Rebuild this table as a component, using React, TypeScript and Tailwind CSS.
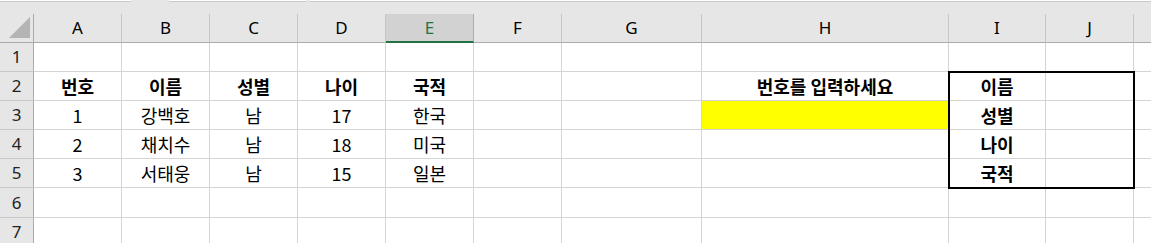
import React from "react";

const columns = ["A", "B", "C", "D", "E", "F", "G", "H", "I", "J", ""];
const activeColumn = "E";

type Cell = { text?: string; bold?: boolean; fill?: string; outline?: boolean };

// sheet contents, rows 1..7, columns A..K
const rows: Cell[][] = [
  [],
  [
    { text: "번호", bold: true },
    { text: "이름", bold: true },
    { text: "성별", bold: true },
    { text: "나이", bold: true },
    { text: "국적", bold: true },
    {},
    {},
    { text: "번호를 입력하세요", bold: true },
    { text: "이름", bold: true, outline: true },
  ],
  [
    { text: "1" },
    { text: "강백호" },
    { text: "남" },
    { text: "17" },
    { text: "한국" },
    {},
    {},
    { fill: "bg-[#ffff00]" },
    { text: "성별", bold: true },
  ],
  [
    { text: "2" },
    { text: "채치수" },
    { text: "남" },
    { text: "18" },
    { text: "미국" },
    {},
    {},
    {},
    { text: "나이", bold: true },
  ],
  [
    { text: "3" },
    { text: "서태웅" },
    { text: "남" },
    { text: "15" },
    { text: "일본" },
    {},
    {},
    {},
    { text: "국적", bold: true },
  ],
  [],
  [],
];

function ToolbarEdge() {
  return (
    <div className="flex h-[2px] bg-[#e6e6e6]">
      <div className="w-[131px] border-b border-[#c8c8c8] bg-white" />
      <div className="ml-[38px] w-[137px] border-b border-[#c8c8c8] bg-white" />
      <div className="ml-[3px] flex-1 border-b border-[#c8c8c8] bg-white" />
    </div>
  );
}

export default function App() {
  return (
    <div
      className="h-[243px] w-[1151px] overflow-hidden bg-white text-[17px] text-black"
      style={{ fontFamily: '"Noto Sans", "Noto Sans CJK KR", sans-serif' }}
    >
      <ToolbarEdge />
      <div className="h-[12px] bg-[#e6e6e6]" />

      <div className="grid grid-cols-[34px_88px_88px_88px_88px_88px_88px_140px_247px_97px_88px_88px] grid-rows-[29px_29px_29px_29px_29px_29px_30px_29px_29px]">
        {/* select-all corner */}
        <div className="relative border-r border-b border-[#ababab] bg-[#e6e6e6]">
          <svg className="absolute right-[3px] bottom-[4px]" width="21" height="21" viewBox="0 0 21 21">
            <polygon points="21,0 21,21 0,21" fill="#b4b4b4" />
          </svg>
        </div>

        {columns.map((col, i) => {
          const active = col === activeColumn;
          return (
            <div
              key={i}
              className={
                active
                  ? "flex items-center justify-center border-r border-b-2 border-r-[#ababab] border-b-[#217346] bg-[#d2d2d2] text-[#217346]"
                  : "flex items-center justify-center border-r border-b border-r-[#c6c6c6] border-b-[#ababab] bg-[#e6e6e6]"
              }
            >
              {col}
            </div>
          );
        })}

        {rows.map((row, r) => (
          <React.Fragment key={r}>
            <div className="flex items-center justify-center border-r border-b border-r-[#ababab] border-b-[#c8c8c8] bg-[#e6e6e6] text-[#222]">
              {r + 1}
            </div>
            {columns.map((_, c) => {
              const cell = row[c] ?? {};
              return (
                <div
                  key={c}
                  className={`relative flex items-center justify-center border-r border-b border-[#d4d4d4] text-[18px] ${
                    cell.fill ?? ""
                  } ${cell.bold ? "font-bold" : ""}`}
                  style={{ fontFamily: '"Noto Sans CJK KR", sans-serif' }}
                >
                  {cell.text}
                  {/* thick outline around the lookup block I2:J5 */}
                  {cell.outline && (
                    <div className="pointer-events-none absolute -top-[1px] -left-[1px] z-10 h-[118px] w-[187px] border-2 border-black" />
                  )}
                </div>
              );
            })}
          </React.Fragment>
        ))}
      </div>
    </div>
  );
}
